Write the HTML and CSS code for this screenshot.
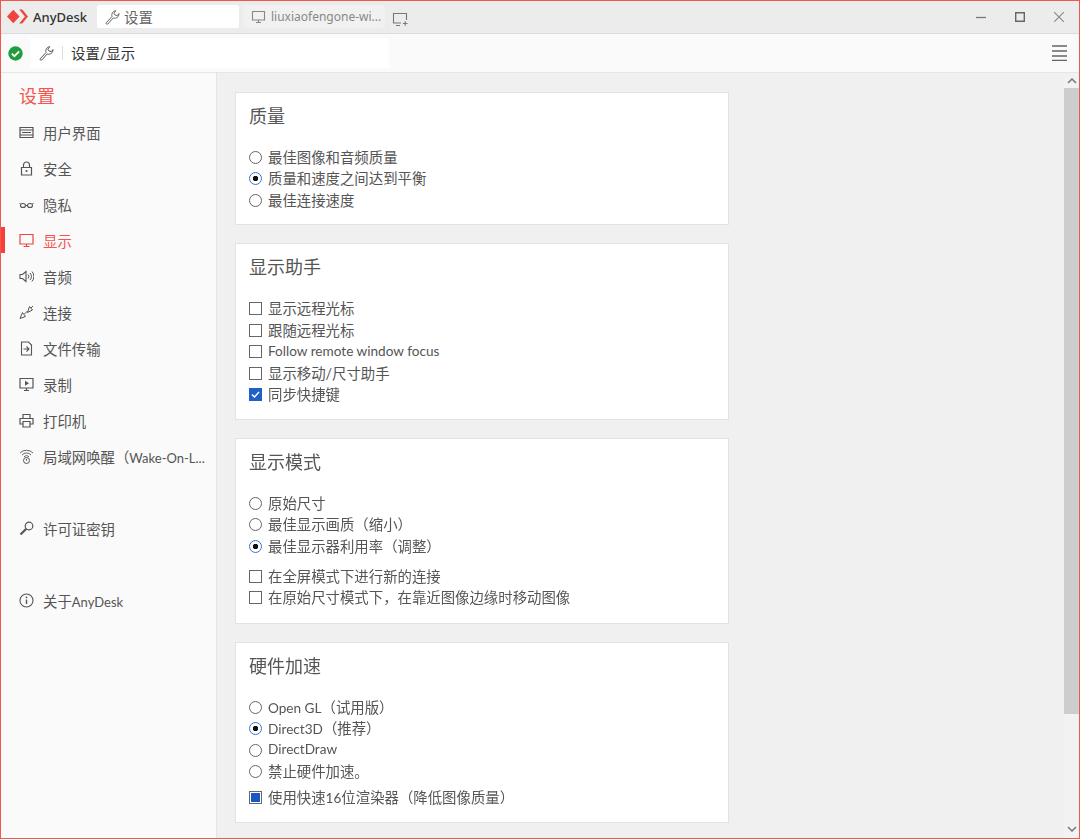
FILE: index.html
```html
<!DOCTYPE html>
<html lang="zh-CN">
<head>
<meta charset="utf-8">
<title>AnyDesk</title>
<link rel="stylesheet" href="styles.css">
</head>
<body>
<div class="app">
  <header class="titlebar">
    <div class="brand">
      <svg class="logo" width="21" height="15" viewBox="0 0 21 15"><path d="M0 7.500 6.300.8 12.600 7.500 6.300 14.200z" fill="#ef443b"/><path d="M12.200.5h3L21 7.500l-5.800 7h-3L18 7.500z" fill="#ef443b"/></svg>
      <span>AnyDesk</span>
    </div>
    <div class="tab tab-active">
      <svg class="ico" width="16" height="16" viewBox="0 0 16 16"><path d="M2.200 13.800 8 7.500C7.300 5 8.500 2 11.800 1.700L9.800 4.200 11 6l2.400.6L15 4.500c0 3.500-3 5.500-5.800 4.500l-5.400 6c-.8.700-2.300-.3-1.600-1.200z" fill="none" stroke="#666" stroke-width="1" stroke-linejoin="round"/></svg>
      <span>设置</span>
    </div>
    <div class="tab tab-idle">
      <svg class="ico" width="15" height="14" viewBox="0 0 15 14"><path d="M1.500 1.500h12v8.500h-12zM5 12.500h5M7.500 10v2.500" fill="none" stroke="#888" stroke-width="1.100"/></svg>
      <span>liuxiaofengone-wi...</span>
    </div>
    <svg class="newtab" width="16" height="15" viewBox="0 0 16 15"><path d="M9 11H1.500V1.500h13V8M4 13.500h4M11 11.500h4.500M13.200 9.300v4.500" fill="none" stroke="#777" stroke-width="1.100"/></svg>
    <div class="winctl">
      <svg width="10" height="10" viewBox="0 0 10 10"><path d="M0 5.500h10" stroke="#777" stroke-width="1.300"/></svg>
      <svg width="10" height="10" viewBox="0 0 10 10"><path d="M.7.700h8.600v8.600H.7z" fill="none" stroke="#666" stroke-width="1.400"/></svg>
      <svg width="10" height="10" viewBox="0 0 10 10"><path d="M0 0l10 10M10 0 0 10" stroke="#888" stroke-width="1.100"/></svg>
    </div>
  </header>

  <div class="toolbar">
    <svg class="status" width="15" height="15" viewBox="0 0 15 15"><circle cx="7.500" cy="7.500" r="7.200" fill="#1f9d3c"/><path d="M3.800 7.600l2.600 2.600 4.800-4.800" fill="none" stroke="#fff" stroke-width="1.800"/></svg>
    <div class="address">
      <svg width="16" height="16" viewBox="0 0 16 16"><path d="M2.200 13.800 8 7.500C7.300 5 8.500 2 11.800 1.700L9.800 4.200 11 6l2.400.6L15 4.500c0 3.500-3 5.500-5.800 4.500l-5.400 6c-.8.700-2.300-.3-1.600-1.200z" fill="none" stroke="#555" stroke-width="1" stroke-linejoin="round"/></svg>
      <i class="sep"></i>
      <span class="crumb">设置/显示</span>
    </div>
    <svg class="menu" width="15" height="16" viewBox="0 0 15 16"><path d="M0 1h15M0 6h15M0 11h15M0 15.500h15" stroke="#666" stroke-width="1.300"/></svg>
  </div>

  <div class="main">
    <nav class="sidebar">
      <h2 class="side-title">设置</h2>
      <a class="nav">
        <svg width="15" height="15" viewBox="0 0 15 15"><path d="M1 2.500h13v10H1z" fill="none" stroke="#555" stroke-width="1.200"/><path d="M1 5h13M1 10h13M3 7.500h9" stroke="#555" stroke-width="1.200"/></svg>
        <span>用户界面</span></a>
      <a class="nav">
        <svg width="15" height="15" viewBox="0 0 15 15"><path d="M2.500 6.500h10v7.500h-10zM4.500 6.500V4a3 3 0 0 1 6 0v2.500" fill="none" stroke="#555" stroke-width="1.200"/><circle cx="7.500" cy="10" r="1.100" fill="#555"/></svg>
        <span>安全</span></a>
      <a class="nav">
        <svg width="15" height="15" viewBox="0 0 15 15"><path d="M.5 6l1 1M14.500 6l-1 1M6 8.500h3" fill="none" stroke="#555" stroke-width="1"/><ellipse cx="4" cy="8.500" rx="2.500" ry="2" fill="none" stroke="#555" stroke-width="1.100"/><ellipse cx="11" cy="8.500" rx="2.500" ry="2" fill="none" stroke="#555" stroke-width="1.100"/></svg>
        <span>隐私</span></a>
      <a class="nav nav-active">
        <svg width="15" height="15" viewBox="0 0 15 15"><path d="M1 1.500h13v9.500H1zM4.500 13.500h6M7.500 11v2.500" fill="none" stroke="#f0453c" stroke-width="1.200"/></svg>
        <span>显示</span></a>
      <a class="nav">
        <svg width="15" height="15" viewBox="0 0 15 15"><path d="M1 5.500h2.500L7 2.500v10l-3.500-3H1z" fill="none" stroke="#555" stroke-width="1.100"/><path d="M9 5.500a3 3 0 0 1 0 4M11 4a5 5 0 0 1 0 7M13 2.500a7.500 7.500 0 0 1 0 10" fill="none" stroke="#555" stroke-width="1"/></svg>
        <span>音频</span></a>
      <a class="nav">
        <svg width="15" height="15" viewBox="0 0 15 15"><path d="M1 13.500 6.500 11.500 3.500 7.500zM8.500 7.500 13.500 5 10.500 1.500z" fill="none" stroke="#555" stroke-width="1"/><path d="M5.500 9l3-3M12 3l2-2" stroke="#555" stroke-width="1"/></svg>
        <span>连接</span></a>
      <a class="nav">
        <svg width="15" height="15" viewBox="0 0 15 15"><path d="M2.500 1h7l3 3v10h-10z" fill="none" stroke="#555" stroke-width="1.100"/><path d="M4.500 8h5M7.500 5.500 10 8l-2.500 2.500" fill="none" stroke="#555" stroke-width="1.100"/></svg>
        <span>文件传输</span></a>
      <a class="nav">
        <svg width="15" height="15" viewBox="0 0 15 15"><path d="M1 1.500h13v9.500H1zM5 13.500h5M7.500 11v2.500" fill="none" stroke="#555" stroke-width="1.200"/><path d="M6 3.800 10 6.200 6 8.700z" fill="#555"/></svg>
        <span>录制</span></a>
      <a class="nav">
        <svg width="15" height="15" viewBox="0 0 15 15"><path d="M4 5V1.500h7V5M4 11H1V5.500h13V11h-3M4 8.500h7V14H4z" fill="none" stroke="#555" stroke-width="1.200"/></svg>
        <span>打印机</span></a>
      <a class="nav">
        <svg width="15" height="15" viewBox="0 0 15 15"><path d="M1 4a9 9 0 0 1 13 0M3 6a6 6 0 0 1 9 0M5 8a3 3 0 0 1 5 0" fill="none" stroke="#666" stroke-width="1"/><circle cx="7.500" cy="11.500" r="3" fill="none" stroke="#555" stroke-width="1"/><path d="M7.500 9.800v2" stroke="#555" stroke-width="1"/></svg>
        <span>局域网唤醒（<span class="lat">Wake-On-L...</span></span></a>
      <a class="nav nav-license">
        <svg width="15" height="15" viewBox="0 0 15 15"><circle cx="10" cy="5" r="3.800" fill="none" stroke="#555" stroke-width="1.200"/><path d="M7.300 7.800 1.500 13.500" stroke="#555" stroke-width="2.200"/></svg>
        <span>许可证密钥</span></a>
      <a class="nav nav-about">
        <svg width="15" height="15" viewBox="0 0 15 15"><circle cx="7.500" cy="7.500" r="6.500" fill="none" stroke="#555" stroke-width="1.100"/><path d="M7.500 6.500v4.500" stroke="#555" stroke-width="1.400"/><circle cx="7.500" cy="4.300" r=".9" fill="#555"/></svg>
        <span>关于<span class="lat">AnyDesk</span></span></a>
    </nav>

    <section class="content">
      <div class="card">
        <h3>质量</h3>
        <div class="opts">
          <label class="opt"><i class="radio"></i><span>最佳图像和音频质量</span></label>
          <label class="opt"><i class="radio on"></i><span>质量和速度之间达到平衡</span></label>
          <label class="opt"><i class="radio"></i><span>最佳连接速度</span></label>
        </div>
      </div>
      <div class="card">
        <h3>显示助手</h3>
        <div class="opts">
          <label class="opt"><i class="check"></i><span>显示远程光标</span></label>
          <label class="opt"><i class="check"></i><span>跟随远程光标</span></label>
          <label class="opt"><i class="check"></i><span class="lat">Follow remote window focus</span></label>
          <label class="opt"><i class="check"></i><span>显示移动/尺寸助手</span></label>
          <label class="opt"><i class="check on"><svg width="11" height="11" viewBox="0 0 11 11"><path d="M2 5.500l2.500 2.500L9 3" fill="none" stroke="#fff" stroke-width="1.500"/></svg></i><span>同步快捷键</span></label>
        </div>
      </div>
      <div class="card card-mode">
        <h3>显示模式</h3>
        <div class="opts">
          <label class="opt"><i class="radio"></i><span>原始尺寸</span></label>
          <label class="opt"><i class="radio"></i><span>最佳显示画质（缩小）</span></label>
          <label class="opt"><i class="radio on"></i><span>最佳显示器利用率（调整）</span></label>
        </div>
        <div class="opts opts-next">
          <label class="opt"><i class="check"></i><span>在全屏模式下进行新的连接</span></label>
          <label class="opt"><i class="check"></i><span>在原始尺寸模式下，在靠近图像边缘时移动图像</span></label>
        </div>
      </div>
      <div class="card">
        <h3>硬件加速</h3>
        <div class="opts">
          <label class="opt"><i class="radio"></i><span><span class="lat">Open GL</span>（试用版）</span></label>
          <label class="opt"><i class="radio on"></i><span><span class="lat">Direct3D</span>（推荐）</span></label>
          <label class="opt"><i class="radio"></i><span class="lat">DirectDraw</span></label>
          <label class="opt"><i class="radio"></i><span>禁止硬件加速。</span></label>
        </div>
        <div class="opts opts-tight">
          <label class="opt"><i class="check mixed"></i><span>使用快速<span class="lat">16</span>位渲染器（降低图像质量）</span></label>
        </div>
      </div>
    </section>

    <div class="scrollbar">
      <svg width="10" height="6" viewBox="0 0 10 6"><path d="M1 5l4-4 4 4" fill="none" stroke="#777" stroke-width="1.500"/></svg>
      <div class="thumb"></div>
      <svg class="down" width="10" height="6" viewBox="0 0 10 6"><path d="M1 1l4 4 4-4" fill="none" stroke="#777" stroke-width="1.500"/></svg>
    </div>
  </div>
</div>
</body>
</html>
```
FILE: styles.css
```css
* { box-sizing: border-box; }
html, body { margin: 0; height: 100%; }
body {
  font-family: "Lato", "Noto Sans CJK SC", sans-serif;
  font-size: 14.4px;
  color: #444;
  background: #f0f0f0;
}
.lat { font-size: 13.6px; }
.nav .lat { font-size: 13px; }
.app {
  width: 1080px;
  height: 839px;
  border: 1px solid #f4564e;
  display: flex;
  flex-direction: column;
  overflow: hidden;
  filter: blur(.3px);
}
.titlebar {
  height: 33px;
  flex: none;
  display: flex;
  align-items: center;
  background: #ececec;
  border-bottom: 1px solid #dcdcdc;
  padding: 0 0 1px 6px;
}
.brand {
  display: flex;
  align-items: center;
  gap: 5px;
  width: 90px;
  font-family: "Noto Sans", sans-serif;
  font-size: 13px;
  font-weight: 500;
  color: #333;
}
.tab {
  height: 23px;
  display: flex;
  align-items: center;
  gap: 4px;
  border-radius: 2px;
  padding-left: 7px;
}
.tab-active {
  width: 142px;
  background: #fff;
  color: #666;
  margin-right: 4px;
}
.tab-idle {
  width: 142px;
  background: #f1f1f1;
  color: #888;
  font-family: "Noto Sans", sans-serif;
  font-size: 12px;
  padding-left: 8px;
  gap: 5px;
}
.newtab { margin: 5px 0 0 7px; }
.winctl {
  margin-left: auto;
  display: flex;
  gap: 29px;
  padding-right: 15px;
}
.toolbar {
  height: 39px;
  flex: none;
  display: flex;
  align-items: center;
  background: #fafafa;
  border-bottom: 1px solid #e6e6e6;
  padding-left: 7px;
}
.address {
  width: 359px;
  margin-left: 7px;
  height: 30px;
  display: flex;
  align-items: center;
  background: #fff;
  padding-left: 8px;
  color: #333;
}
.crumb { margin-bottom: 1px; }
.sep {
  width: 1px;
  height: 14px;
  background: #ddd;
  margin: 0 8px;
}
.menu { margin-left: auto; margin-right: 12px; }
.main {
  flex: 1;
  min-height: 0;
  display: flex;
}
.sidebar {
  width: 216px;
  flex: none;
  background: #fafafa;
  border-right: 1px solid #e4e4e4;
  padding-top: 9px;
}
.side-title {
  margin: 0 0 3px 18px;
  height: 29px;
  line-height: 29px;
  font-size: 18px;
  font-weight: 400;
  color: #f4564e;
}
.nav {
  height: 36px;
  display: flex;
  align-items: center;
  gap: 9px;
  padding-left: 18px;
  color: #555;
  white-space: nowrap;
  position: relative;
}
.nav svg { flex: none; }
.nav-active { color: #f4564e; }
.nav-active::before {
  content: "";
  position: absolute;
  left: 0;
  top: 5px;
  bottom: 5px;
  width: 4px;
  background: #f4403a;
}
.nav-license { margin-top: 36px; }
.nav-about { margin-top: 36px; }
.content {
  flex: 1;
  padding: 18.5px 0 0 18px;
  display: flex;
  flex-direction: column;
  gap: 18px;
  overflow: hidden;
}
.card {
  width: 494px;
  flex: none;
  background: #fff;
  border: 1px solid #e2e2e2;
  padding: 10px 13px 14px;
}
.card-mode { padding-bottom: 15px; }
.card h3 {
  margin: 0 0 16px;
  height: 27px;
  line-height: 27px;
  font-size: 18px;
  font-weight: 400;
  color: #555;
}
.opt {
  height: 21.5px;
  display: flex;
  align-items: center;
  gap: 6px;
  color: #555;
  white-space: nowrap;
}
.opts-next { margin-top: 8.5px; }
.opts-tight { margin-top: 4.5px; }
.radio {
  width: 13px;
  height: 13px;
  flex: none;
  margin-top: 2px;
  border: 1.500px solid #666;
  border-radius: 50%;
  background: #fff;
  display: block;
}
.radio.on {
  border-color: #3a75d8;
  background: radial-gradient(circle, #111 0 2.500px, #fff 3px);
}
.check {
  width: 13px;
  height: 13px;
  flex: none;
  margin-top: 2px;
  border: 1px solid #666;
  background: #fff;
  display: flex;
  align-items: center;
  justify-content: center;
}
.check.on {
  background: #1f5fc8;
  border-color: #1f5fc8;
}
.check.mixed {
  background: #1a56c4;
  border: 2px solid #fff;
  outline: 1px solid #666;
  outline-offset: -1px;
}
.scrollbar {
  width: 15px;
  flex: none;
  background: #f2f2f2;
  display: flex;
  flex-direction: column;
  align-items: center;
  padding-top: 5px;
}
.thumb {
  width: 100%;
  height: 626px;
  margin-top: 4px;
  background: #cdcdcd;
}
.down { margin-top: auto; margin-bottom: 6px; }
```
